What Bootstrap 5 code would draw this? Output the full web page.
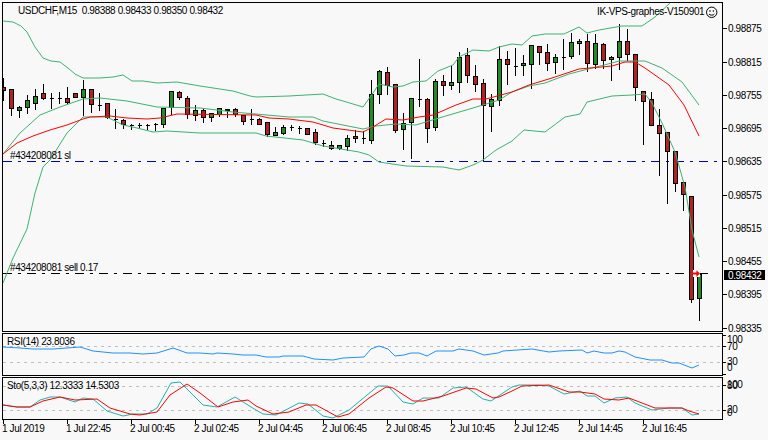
<!DOCTYPE html>
<html lang="en">
<head>
  <meta charset="UTF-8" />
  <title>USDCHF,M15</title>
  <link href="https://cdn.jsdelivr.net/npm/bootstrap@5.3.0/dist/css/bootstrap.min.css" rel="stylesheet" />
  <style>
    html, body { background: #f8f8f8; overflow: hidden; }
    .terminal { width: 768px; height: 440px; font-family: "Liberation Sans", Arial, sans-serif; color: #000; }
    .pane { display: block; flex: none; overflow: visible; }
    .pane text { font-family: "Liberation Sans", Arial, sans-serif; font-size: 10px; letter-spacing: -.38px; fill: #000; }
    .pane text.tag { fill: #fff; }
    .time-axis { height: 16px; padding-left: 2px; font-size: 10px; letter-spacing: -.38px; line-height: 10px; }
    .time-axis span { width: 64px; flex: none; white-space: nowrap; }
  </style>
</head>
<body class="m-0">
  <div class="terminal d-flex flex-column">
    <svg class="pane" id="main" width="768" height="332" viewBox="0 0 768 332"></svg>
    <svg class="pane" id="rsi" width="768" height="44" viewBox="0 332 768 44"></svg>
    <svg class="pane" id="sto" width="768" height="48" viewBox="0 376 768 48"></svg>
    <div class="time-axis d-flex" id="times"></div>
  </div>

  <script src="https://cdn.jsdelivr.net/npm/bootstrap@5.3.0/dist/js/bootstrap.bundle.min.js"></script>
  <script>
    // wick top, wick bottom, body top, body bottom, colour (r/g, d = doji)
    const candles = [
      [77,100,87,90,'r'],[89,115,89,108,'r'],[105,117,107,110,'g'],[94,113,100,107,'g'],[88,109,96,103,'g'],[83,99,93,98,'r'],
      [92,108,98,98,'d'],[91,103,98,98,'d'],[86,103,98,102,'r'],[93,97,93,97,'r'],[79,115,89,97,'g'],[89,112,89,104,'r'],
      [92,110,105,105,'d'],[103,118,103,117,'r'],[108,128,119,119,'d'],[118,128,120,124,'r'],[123,129,125,125,'d'],[122,128,125,125,'d'],
      [123,129,125,125,'d'],[122,130,124,124,'d'],[108,127,108,124,'g'],[91,114,91,107,'g'],[90,99,92,97,'r'],[95,118,98,114,'r'],
      [104,120,110,115,'g'],[107,122,110,117,'r'],[112,121,113,117,'g'],[107,116,108,114,'g'],[108,117,109,110,'g'],[107,116,109,114,'r'],
      [114,124,115,121,'r'],[108,124,119,119,'d'],[117,124,119,124,'r'],[121,136,122,134,'r'],[126,135,132,135,'g'],[124,134,127,133,'g'],
      [124,130,127,127,'d'],[125,133,128,128,'d'],[127,134,128,134,'r'],[128,144,132,142,'r'],[139,146,143,143,'d'],[140,149,145,148,'r'],
      [145,149,145,148,'g'],[134,150,138,146,'g'],[129,142,136,138,'r'],[130,143,138,138,'d'],[79,143,94,140,'g'],[69,103,71,94,'g'],
      [66,94,72,85,'r'],[84,132,84,130,'r'],[112,149,123,129,'g'],[98,158,98,122,'g'],[58,106,99,99,'d'],[97,142,99,128,'r'],
      [78,130,81,127,'g'],[74,95,81,85,'r'],[65,89,82,85,'g'],[51,92,57,82,'g'],[47,82,55,75,'r'],[64,91,76,84,'r'],
      [78,160,83,105,'r'],[93,131,99,106,'g'],[45,105,59,100,'g'],[50,84,59,64,'r'],[47,75,66,66,'d'],[54,75,63,65,'g'],
      [44,88,45,64,'g'],[46,64,46,52,'r'],[43,70,52,63,'r'],[53,73,57,62,'g'],[38,69,57,57,'d'],[32,58,42,56,'g'],
      [38,54,41,43,'g'],[33,71,41,63,'r'],[33,68,43,64,'g'],[42,68,44,60,'r'],[55,80,57,59,'g'],[23,69,41,57,'g'],
      [28,60,41,54,'r'],[54,100,54,87,'r'],[91,144,91,101,'r'],[91,125,99,125,'r'],[108,175,125,133,'r'],[132,203,132,151,'r'],
      [150,191,151,183,'r'],[182,210,182,194,'r'],[195,302,196,299,'r'],[274,320,274,298,'g']
    ];

    const bandUpper = [[3,21],[13,22],[21,26],[27,32],[35,47],[43,58],[51,61],[60,62],[68,68],[75,74],[83,78],[100,78],[113,77],[123,75],[132,81],[143,81],[157,83],[177,82],[200,86],[233,91],[250,96],[256,97],[289,96],[323,94],[336,99],[343,101],[363,107],[373,93],[379,84],[393,87],[403,86],[413,82],[426,81],[438,71],[453,65],[459,57],[473,50],[489,51],[499,47],[512,44],[522,45],[532,36],[545,34],[564,34],[579,27],[587,33],[599,30],[622,26],[642,26],[655,17],[671,2]];
    const bandInner = [[3,154],[20,133],[40,115],[60,107],[83,99],[100,98],[127,101],[157,107],[200,108],[233,112],[256,114],[289,117],[313,117],[323,121],[343,125],[363,129],[376,126],[396,124],[416,125],[429,121],[456,113],[483,105],[499,100],[512,92],[529,86],[545,83],[569,74],[592,68],[612,63],[619,61],[645,61],[662,68],[682,82],[699,105]];
    const bandLower = [[3,283],[13,258],[27,229],[35,193],[43,167],[50,160],[67,133],[83,117],[107,117],[123,125],[137,128],[153,132],[167,131],[200,133],[240,133],[256,133],[266,136],[303,140],[323,146],[359,152],[369,155],[379,162],[406,166],[443,167],[459,170],[473,165],[483,160],[496,150],[512,141],[524,130],[545,132],[565,117],[580,114],[587,102],[612,96],[632,95],[645,94],[652,103],[662,123],[675,152],[685,187],[692,230],[699,257]];
    const maRed = [[3,154],[17,143],[33,136],[50,130],[67,125],[83,119],[90,117],[110,116],[127,118],[147,119],[160,118],[177,114],[256,115],[269,118],[289,119],[313,122],[333,128],[363,132],[373,127],[386,119],[403,120],[419,117],[433,115],[456,105],[473,99],[486,99],[512,92],[529,85],[552,78],[579,69],[612,66],[625,62],[635,62],[645,68],[669,85],[684,105],[699,136]];
    const rsiLine = [[3,347],[20,348],[33,349],[53,349],[80,347],[93,351],[113,353],[130,353],[143,354],[157,353],[173,348],[187,353],[200,353],[213,354],[217,353],[233,354],[243,355],[256,355],[266,357],[279,357],[283,356],[303,356],[314,359],[333,360],[343,358],[364,357],[371,349],[379,346],[388,349],[395,356],[404,355],[411,353],[419,353],[427,356],[436,351],[453,351],[459,349],[473,351],[484,355],[498,353],[503,351],[532,349],[549,352],[559,351],[582,350],[587,353],[594,351],[604,353],[612,353],[619,351],[625,352],[635,357],[650,360],[662,360],[672,363],[679,363],[692,368],[699,365]];
    const stoMain = [[3,405],[17,407],[30,407],[40,400],[50,397],[60,397],[75,402],[83,398],[93,399],[107,411],[123,416],[133,414],[147,414],[157,408],[171,383],[180,382],[190,392],[203,405],[217,407],[235,397],[256,410],[263,414],[276,415],[299,403],[308,404],[323,416],[333,418],[349,410],[378,386],[388,386],[403,402],[413,404],[423,398],[439,398],[453,388],[466,387],[483,399],[491,401],[512,387],[519,385],[539,385],[549,386],[564,394],[580,391],[587,396],[595,396],[604,403],[615,398],[627,397],[635,403],[652,410],[669,408],[682,408],[692,415],[699,414]];
    const stoSignal = [[3,405],[17,407],[30,407],[43,401],[60,397],[75,400],[97,399],[110,408],[130,414],[140,415],[157,412],[170,395],[187,384],[200,393],[218,407],[233,402],[248,400],[256,406],[273,414],[289,412],[306,405],[316,405],[338,417],[349,414],[369,398],[386,387],[393,388],[413,401],[423,401],[443,396],[466,388],[476,389],[493,398],[499,397],[512,391],[522,386],[549,385],[569,392],[580,392],[595,394],[604,399],[619,400],[629,398],[655,408],[682,408],[689,411],[699,414]];

    const polyline = (pts, colour) =>
      `<polyline points="${pts.join(' ')}" fill="none" stroke="${colour}" stroke-width="1"/>`;
    const hline = (x1, x2, y, colour, dash) =>
      `<line x1="${x1}" x2="${x2}" y1="${y + .5}" y2="${y + .5}" stroke="${colour}" ${dash ? `stroke-dasharray="${dash}"` : ''} shape-rendering="crispEdges"/>`;
    const frame = (top, bottom) =>
      `<rect x="2.5" y="${top + .5}" width="720" height="${bottom - top}" fill="none" stroke="#000" shape-rendering="crispEdges"/>`;
    const label = (x, y, str, cls) => `<text x="${x}" y="${y}"${cls ? ` class="${cls}"` : ''}>${str}</text>`;
    const tick = (x1, y1, x2, y2) =>
      `<line x1="${x1 + .5}" y1="${y1 + .5}" x2="${x2 + .5}" y2="${y2 + .5}" stroke="#000" shape-rendering="crispEdges"/>`;

    function drawCandle(c, i) {
      const x = 3 + 8 * i;
      const [wt, wb, bt, bb, kind] = c;
      let out = tick(x, wt, x, wb);
      if (kind === 'd') return out + tick(x - 2, bt, x + 2, bt);
      const fill = kind === 'r' ? '#b22222' : '#228b22';
      return out + `<rect x="${x - 1.5}" y="${bt + .5}" width="4" height="${bb - bt}" fill="${fill}" stroke="#000" shape-rendering="crispEdges"/>`;
    }

    // main pane
    const prices = [['0.98875',28],['0.98815',62],['0.98755',95],['0.98695',128],['0.98635',161],['0.98575',195],['0.98515',228],['0.98455',261],['0.98395',294],['0.98335',328]];
    document.getElementById('main').innerHTML = `
      <defs><clipPath id="plot"><rect x="3" y="3" width="719" height="328"/></clipPath></defs>
      <g clip-path="url(#plot)">
        ${hline(3, 718, 161, '#0000cd', '9 6 3 6')}
        ${hline(3, 708, 273, '#000', '9 6 3 6')}
        ${candles.map(drawCandle).join('')}
        ${polyline(bandUpper, '#3cb371')}${polyline(bandInner, '#3cb371')}${polyline(bandLower, '#3cb371')}
        ${polyline(maRed, '#f00')}
      </g>
      ${frame(2, 331)}
      ${prices.map(p => tick(722, p[1], 726, p[1]) + label(728, p[1] + 4, p[0])).join('')}
      <rect x="724" y="270" width="41" height="10" fill="#000"/>
      ${label(728, 279, '0.98432', 'tag')}
      <rect x="693" y="270" width="7" height="7" fill="#fff"/>
      <path d="M693 272.6h3.4v-2.4l3.6 3.4-3.6 3.4v-2.4h-3.4z" fill="#f00"/>
      ${label(18, 14, 'USDCHF,M15&#160; 0.98388 0.98433 0.98350 0.98432')}
      ${label(597, 15, 'IK-VPS-graphes-V150901')}
      <g fill="none" stroke="#000">
        <circle cx="711.7" cy="12.3" r="5.2"/>
        <path d="M709 14c.8 1.5 4.6 1.5 5.4 0"/>
      </g>
      <circle cx="710" cy="11" r=".8"/><circle cx="713.4" cy="11" r=".8"/>
      ${label(10, 159, '#434208081 sl')}
      ${label(10, 271, '#434208081 sell 0.17')}`;

    // RSI pane
    document.getElementById('rsi').innerHTML = `
      ${hline(3, 722, 346, '#c0c0c0', '3 4')}${hline(3, 722, 362, '#c0c0c0', '3 4')}
      ${polyline(rsiLine, '#1e90ff')}
      ${frame(333, 375)}
      ${tick(722, 335, 725, 335)}${tick(722, 346, 725, 346)}${tick(722, 362, 725, 362)}${tick(722, 374, 725, 374)}
      ${label(727, 343, '100')}${label(727, 350, '70')}${label(727, 365, '30')}${label(727, 371, '0')}
      ${label(7, 345, 'RSI(14) 23.8036')}`;

    // stochastic pane, the time ticks hang below its frame
    document.getElementById('sto').innerHTML = `
      ${hline(3, 722, 386, '#c0c0c0', '3 4')}${hline(3, 722, 410, '#c0c0c0', '3 4')}
      ${polyline(stoMain, '#20b2aa')}${polyline(stoSignal, '#f00')}
      ${frame(377, 419)}
      ${tick(722, 385, 725, 385)}${tick(722, 410, 725, 410)}
      ${label(727, 388, '100')}${label(727, 389, '80')}${label(727, 413, '20')}${label(727, 416, '0')}
      ${label(7, 389, 'Sto(5,3,3) 12.3333 14.5303')}
      ${Array.from({ length: 11 }, (_, i) => tick(3 + 64 * i, 419, 3 + 64 * i, 423)).join('')}`;

    const times = ['1 Jul 2019', '1 Jul 22:45', '2 Jul 00:45', '2 Jul 02:45', '2 Jul 04:45', '2 Jul 06:45', '2 Jul 08:45', '2 Jul 10:45', '2 Jul 12:45', '2 Jul 14:45', '2 Jul 16:45'];
    document.getElementById('times').innerHTML = times.map(t => `<span>${t}</span>`).join('');
  </script>
</body>
</html>
